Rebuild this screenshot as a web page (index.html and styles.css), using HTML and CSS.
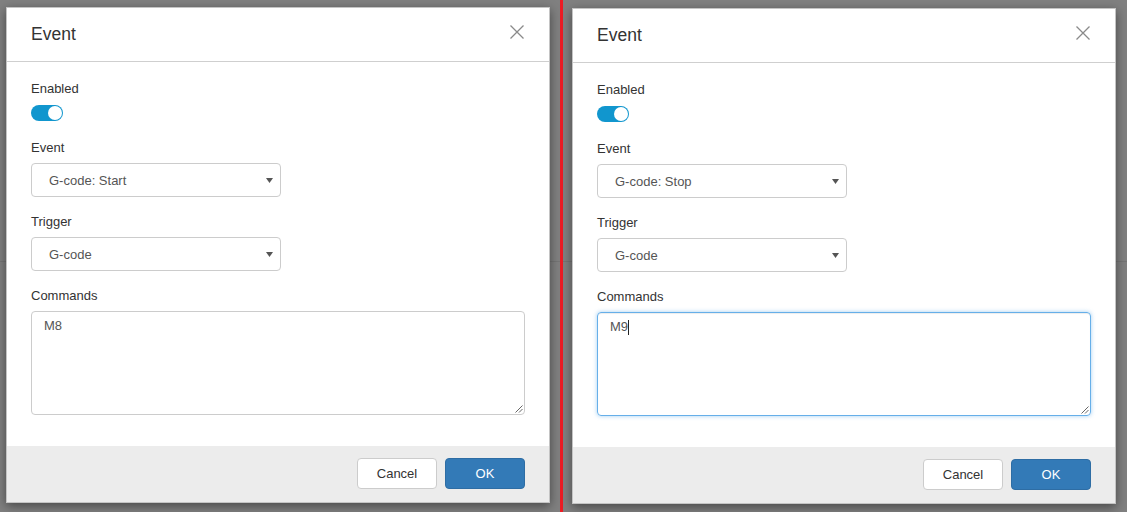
FILE: index.html
```html
<!DOCTYPE html>
<html>
<head>
<meta charset="utf-8">
<link rel="stylesheet" href="styles.css">
</head>
<body>
<div class="pane pane-left">
  <div class="modal">
    <div class="modal-header">
      <div class="modal-title">Event</div>
      <svg class="close" width="14" height="14" viewBox="0 0 14 14"><path d="M0.5 0.5L13.5 13.5M13.5 0.5L0.5 13.5" stroke="#8a8a8a" stroke-width="1.3" fill="none"/></svg>
    </div>
    <div class="modal-body">
      <div class="form-group">
        <div class="label">Enabled</div>
        <div class="toggle"><span class="knob"></span></div>
      </div>
      <div class="form-group">
        <div class="label">Event</div>
        <div class="select"><span>G-code: Start</span><svg width="7" height="5" viewBox="0 0 7 5"><path d="M0 0H7L3.5 5Z" fill="#555"/></svg></div>
      </div>
      <div class="form-group">
        <div class="label">Trigger</div>
        <div class="select"><span>G-code</span><svg width="7" height="5" viewBox="0 0 7 5"><path d="M0 0H7L3.5 5Z" fill="#555"/></svg></div>
      </div>
      <div class="form-group">
        <div class="label">Commands</div>
        <div class="textarea"><span>M8</span>
          <svg class="grip" width="9" height="9" viewBox="0 0 9 9"><path d="M8.5 1.5L1.5 8.5M8.5 5L5 8.5" stroke="#666" stroke-width="1" fill="none"/></svg>
        </div>
      </div>
    </div>
    <div class="modal-footer">
      <div class="btn btn-default">Cancel</div>
      <div class="btn btn-primary">OK</div>
    </div>
  </div>
</div>
<div class="divider"></div>
<div class="pane pane-right">
  <div class="modal">
    <div class="modal-header">
      <div class="modal-title">Event</div>
      <svg class="close" width="14" height="14" viewBox="0 0 14 14"><path d="M0.5 0.5L13.5 13.5M13.5 0.5L0.5 13.5" stroke="#8a8a8a" stroke-width="1.3" fill="none"/></svg>
    </div>
    <div class="modal-body">
      <div class="form-group">
        <div class="label">Enabled</div>
        <div class="toggle"><span class="knob"></span></div>
      </div>
      <div class="form-group">
        <div class="label">Event</div>
        <div class="select"><span>G-code: Stop</span><svg width="7" height="5" viewBox="0 0 7 5"><path d="M0 0H7L3.5 5Z" fill="#555"/></svg></div>
      </div>
      <div class="form-group">
        <div class="label">Trigger</div>
        <div class="select"><span>G-code</span><svg width="7" height="5" viewBox="0 0 7 5"><path d="M0 0H7L3.5 5Z" fill="#555"/></svg></div>
      </div>
      <div class="form-group">
        <div class="label">Commands</div>
        <div class="textarea focused"><span>M9</span><span class="caret"></span>
          <svg class="grip" width="9" height="9" viewBox="0 0 9 9"><path d="M8.5 1.5L1.5 8.5M8.5 5L5 8.5" stroke="#666" stroke-width="1" fill="none"/></svg>
        </div>
      </div>
    </div>
    <div class="modal-footer">
      <div class="btn btn-default">Cancel</div>
      <div class="btn btn-primary">OK</div>
    </div>
  </div>
</div>
</body>
</html>
```

FILE: styles.css
```css
html, body {
  margin: 0;
  padding: 0;
}
body {
  width: 1127px;
  height: 512px;
  overflow: hidden;
  display: flex;
  font-family: "Liberation Sans", Arial, sans-serif;
  font-size: 13px;
  color: #333;
  background: linear-gradient(to bottom, #808080 0, #808080 261px, #757575 261px, #757575 262px, #808080 262px);
}
.pane {
  box-sizing: border-box;
}
.pane-left {
  width: 560px;
  padding: 7px 0 0 6px;
}
.pane-right {
  flex: 1;
  padding: 8px 0 0 9px;
}
.divider {
  width: 3px;
  background: #ec1c24;
}
.modal {
  width: 544px;
  box-sizing: border-box;
  background: #fff;
  border: 1px solid #c4c4c4;
  box-shadow: 0 3px 10px rgba(0, 0, 0, 0.45);
}
.modal-header {
  display: flex;
  justify-content: space-between;
  align-items: flex-start;
  padding: 14px 25px 14px 24px;
  border-bottom: 1px solid #cfcfcf;
}
.modal-title {
  font-size: 17.5px;
  line-height: 25px;
  color: #333;
}
.close {
  display: block;
  margin-top: 3px;
}
.modal-body {
  padding: 17px 24px 16px;
}
.form-group {
  display: flex;
  flex-direction: column;
  align-items: stretch;
  margin-bottom: 15px;
}
.label {
  line-height: 20px;
  margin-bottom: 5px;
  color: #333;
}
.toggle {
  position: relative;
  align-self: flex-start;
  width: 32px;
  height: 16px;
  margin: 1px 0 2px;
  border-radius: 8px;
  background: #1196ce;
}
.knob {
  position: absolute;
  right: 1px;
  top: 1px;
  width: 14px;
  height: 14px;
  border-radius: 50%;
  background: #fff;
}
.select {
  width: 250px;
  height: 34px;
  box-sizing: border-box;
  border: 1px solid #cccccc;
  border-radius: 4px;
  padding: 0 7px 0 17px;
  display: flex;
  align-items: center;
  justify-content: space-between;
  color: #555;
}
.select svg {
  display: block;
}
.textarea {
  position: relative;
  height: 104px;
  box-sizing: border-box;
  border: 1px solid #cccccc;
  border-radius: 4px;
  padding: 5px 12px;
  line-height: 18px;
  color: #555;
  display: flex;
  align-items: flex-start;
}
.textarea.focused {
  border-color: #66afe9;
  box-shadow: inset 0 1px 1px rgba(0, 0, 0, .075), 0 0 4px rgba(102, 175, 233, .6);
}
.caret {
  display: inline-block;
  width: 1px;
  height: 15px;
  margin-top: 2px;
  background: #222;
}
.grip {
  position: absolute;
  right: 1px;
  bottom: 1px;
}
.modal-footer {
  display: flex;
  justify-content: flex-end;
  gap: 8px;
  padding: 12px 24px 13px;
  background: #ececec;
}
.btn {
  width: 80px;
  height: 31px;
  box-sizing: border-box;
  border-radius: 4px;
  border: 1px solid #ccc;
  display: flex;
  align-items: center;
  justify-content: center;
  font-size: 13px;
}
.btn-default {
  background: #fff;
  color: #333;
}
.btn-primary {
  background: #337ab7;
  border-color: #2e6da4;
  color: #fff;
}
```
